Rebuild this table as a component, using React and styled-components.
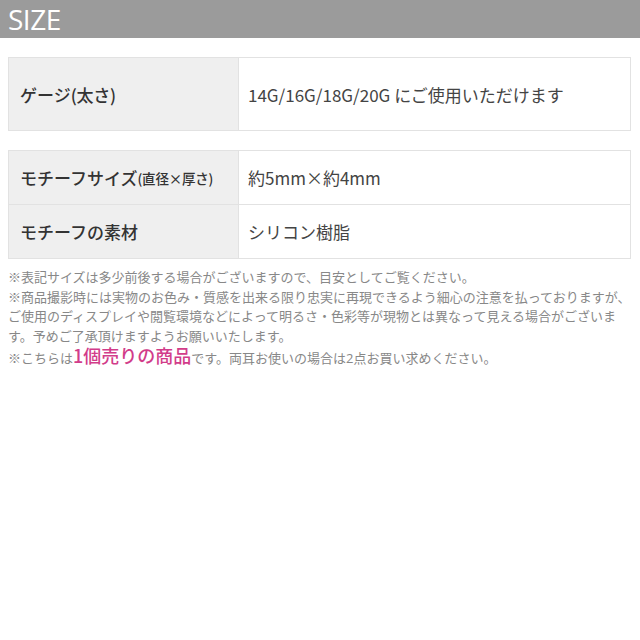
import React from 'react';
import styled, { createGlobalStyle } from 'styled-components';

const GlobalStyle = createGlobalStyle`
  body {
    margin: 0;
    background: #fff;
    font-family: "Open Sans", "Noto Sans CJK JP", sans-serif;
  }
`;

const specs = [
  [{ label: 'ゲージ', sub: '(太さ)', value: '14G/16G/18G/20G にご使用いただけます', tall: true }],
  [
    { label: 'モチーフサイズ', sub: '(直径×厚さ)', value: '約5mm×約4mm', small: true },
    { label: 'モチーフの素材', value: 'シリコン樹脂' },
  ],
];

const App = () => {
  return (
    <Page>
      <GlobalStyle />
      <Header>SIZE</Header>
      {specs.map((rows, i) => (
        <Table key={i}>
          {rows.map((row) => (
            <Row key={row.label} $tall={row.tall}>
              <Label>
                {row.label}
                {row.sub && <Sub $small={row.small}>{row.sub}</Sub>}
              </Label>
              <Value>{row.value}</Value>
            </Row>
          ))}
        </Table>
      ))}
      <Notes>
        <Line>※表記サイズは多少前後する場合がございますので、目安としてご覧ください。</Line>
        <Line>※商品撮影時には実物のお色み・質感を出来る限り忠実に再現できるよう細心の注意を払っておりますが、</Line>
        <Line>ご使用のディスプレイや閲覧環境などによって明るさ・色彩等が現物とは異なって見える場合がございま</Line>
        <Line>す。予めご了承頂けますようお願いいたします。</Line>
        <Line>
          ※こちらは<Pink>1個売りの商品</Pink>です。両耳お使いの場合は2点お買い求めください。
        </Line>
      </Notes>
    </Page>
  );
};

export default App;

const Page = styled.div`
  width: 640px;
`;

const Header = styled.div`
  height: 38px;
  background: #9b9b9b;
  color: #fff;
  font-family: "Open Sans", sans-serif;
  font-size: 28px;
  line-height: 38px;
  padding-left: 8px;
  letter-spacing: -0.5px;
`;

const Table = styled.div`
  margin: 19px 9px 0 8px;
  border: 1px solid #e2e2e2;
  display: flex;
  flex-direction: column;
`;

const Row = styled.div`
  display: grid;
  grid-template-columns: 230px 1fr;
  height: ${(p) => (p.$tall ? '72px' : '53px')};
  & + & {
    border-top: 1px solid #e2e2e2;
  }
`;

const Label = styled.div`
  display: flex;
  align-items: center;
  background: #efefef;
  border-right: 1px solid #e2e2e2;
  padding-left: 11px;
  font-family: "Noto Sans CJK JP", sans-serif;
  font-size: 17px;
  font-weight: 500;
  color: #333;
`;

const Sub = styled.span`
  font-size: ${(p) => (p.$small ? '13.5px' : '17px')};
  letter-spacing: -0.2px;
`;

const Value = styled.div`
  display: flex;
  align-items: center;
  padding-left: 9px;
  font-family: "Noto Sans CJK JP", sans-serif;
  font-size: 17px;
  color: #444;
`;

const Notes = styled.div`
  margin: 9px 8px 0 8px;
  font-size: 13px;
  line-height: 19.5px;
  color: #888;
`;

const Line = styled.div`
  white-space: nowrap;
`;

const Pink = styled.span`
  font-family: "Noto Sans CJK JP", sans-serif;
  font-size: 18px;
  line-height: 1;
  font-weight: 500;
  color: #d23c8a;
`;
